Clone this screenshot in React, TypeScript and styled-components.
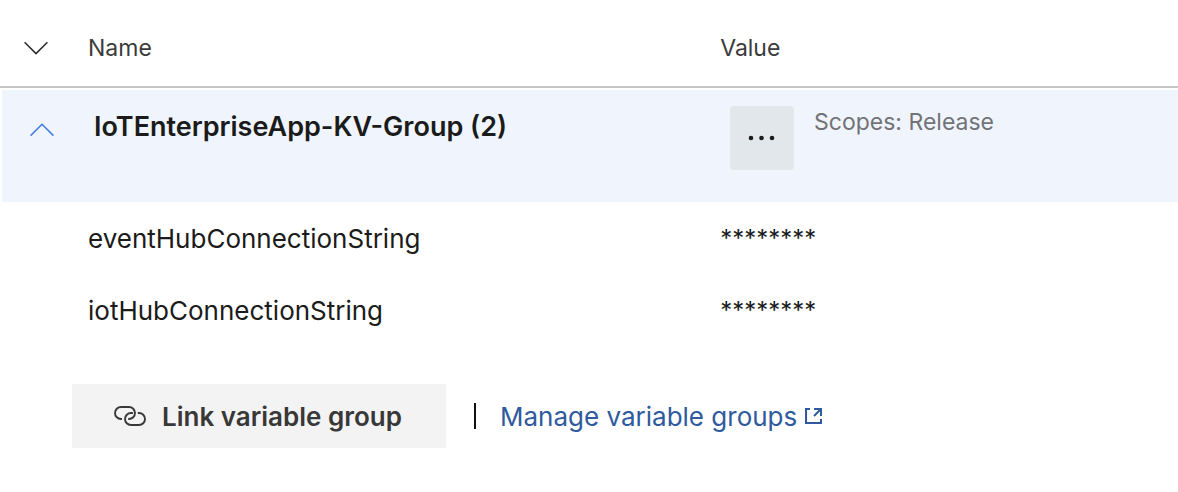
import React from "react";
import styled, { createGlobalStyle } from "styled-components";

const GlobalStyle = createGlobalStyle`
  * {
    box-sizing: border-box;
  }

  body {
    margin: 0;
    background: #ffffff;
    color: #1b1b1b;
    font-family: Inter, "Liberation Sans", sans-serif;
    font-size: 26px;
    line-height: 36px;
  }
`;

const Page = styled.main`
  padding-bottom: 44px;
`;

const VariableTable = styled.table`
  display: block;
  width: 100%;
`;

const TableHead = styled.thead`
  display: block;
  border-bottom: 2px solid #c6c6c8;
`;

const TableBody = styled.tbody`
  display: block;
  padding-top: 2px;
`;

const Row = styled.tr`
  display: grid;
  grid-template-columns: 88px minmax(0, 58fr) minmax(0, 42fr);
  min-height: 72px;
  padding-top: 2px;
  align-items: center;
`;

const HeaderRow = styled(Row)`
  min-height: 86px;
  padding-top: 10px;
`;

const GroupRow = styled(Row)`
  min-height: 112px;
  margin-left: 2px;
  padding-top: 16px;
  background: #f0f5fd;
  align-items: start;
`;

const HeaderCell = styled.th`
  padding: 0;
  color: #3b3b3b;
  font-size: 23px;
  font-weight: 400;
  text-align: left;
`;

const ToggleHeaderCell = styled(HeaderCell)`
  display: flex;
  padding-left: 24px;
`;

const Cell = styled.td`
  padding: 0;
`;

const SecretCell = styled(Cell)`
  font-size: 24px;
`;

const ToggleCell = styled(Cell)`
  display: flex;
  padding: 17px 0 0 28px;
`;

const GroupName = styled.th`
  padding: 3px 0 0 4px;
  font-size: 27px;
  font-weight: 600;
  text-align: left;
`;

const GroupActions = styled(Cell)`
  display: flex;
  align-items: flex-start;
  gap: 20px;
  padding-left: 9px;
`;

const Scopes = styled.span`
  color: #727377;
  font-size: 23px;
  line-height: 32px;
`;

const IconButton = styled.button<{ $color: string }>`
  display: flex;
  padding: 0;
  border: 0;
  background: transparent;
  color: ${({ $color }) => $color};
  cursor: pointer;
`;

const MoreButton = styled.button`
  display: flex;
  flex: none;
  align-items: center;
  justify-content: center;
  width: 64px;
  height: 64px;
  padding: 0;
  border: 0;
  border-radius: 4px;
  background: #e2e7eb;
  color: #1b1b1b;
  cursor: pointer;
`;

const Footer = styled.footer`
  display: flex;
  align-items: center;
  margin-top: 38px;
  padding-left: 72px;
`;

const LinkGroupButton = styled.button`
  display: flex;
  align-items: center;
  gap: 15px;
  height: 64px;
  padding: 0 44px 0 41px;
  border: 0;
  background: #f3f3f3;
  color: #383838;
  font: inherit;
  font-weight: 600;
  white-space: nowrap;
  cursor: pointer;
`;

const Label = styled.span`
  padding-top: 2px;
`;

const Divider = styled.span`
  width: 2px;
  height: 26px;
  margin: 0 24px 0 28px;
  background: #111111;
`;

const ManageLink = styled.a`
  display: flex;
  align-items: center;
  gap: 8px;
  color: #2f5a9e;
  text-decoration: none;
  white-space: nowrap;
`;

const variables = [
  { name: "eventHubConnectionString", value: "********" },
  { name: "iotHubConnectionString", value: "********" },
];

function Chevron({ up = false }: { up?: boolean }) {
  return (
    <svg width="24" height="14" viewBox="0 0 24 14" fill="none" stroke="currentColor" strokeWidth="1.5" aria-hidden="true">
      <path d={up ? "M.6 12.6 12 1.2l11.4 11.4" : "M.6 1.2 12 12.6 23.4 1.2"} />
    </svg>
  );
}

function MoreIcon() {
  return (
    <svg width="28" height="6" viewBox="0 0 28 6" fill="currentColor" aria-hidden="true">
      <circle cx="3" cy="3" r="2.3" />
      <circle cx="13.5" cy="3" r="2.3" />
      <circle cx="24" cy="3" r="2.3" />
    </svg>
  );
}

function LinkIcon() {
  return (
    <svg width="34" height="22" viewBox="0 0 34 22" fill="none" stroke="currentColor" strokeWidth="1.9" aria-hidden="true">
      <path d="M9 14H8A6 6 0 0 1 8 2h8a6 6 0 0 1 0 12h-.8" />
      <path d="M20 8h-2a6 6 0 0 0 0 12h8a6 6 0 0 0 0-12h-1.200" />
    </svg>
  );
}

function ExternalIcon() {
  return (
    <svg width="18" height="18" viewBox="0 0 18 18" fill="none" stroke="currentColor" strokeWidth="2" aria-hidden="true">
      <path d="M5 2H1v14h15v-4M9 2h7v7M16 2 9 9" />
    </svg>
  );
}

export default function App() {
  return (
    <>
      <GlobalStyle />
      <Page>
        <VariableTable>
          <TableHead>
            <HeaderRow>
              <ToggleHeaderCell scope="col">
                <IconButton type="button" $color="#2b2b2b" aria-label="Expand all groups">
                  <Chevron />
                </IconButton>
              </ToggleHeaderCell>
              <HeaderCell scope="col">Name</HeaderCell>
              <HeaderCell scope="col">Value</HeaderCell>
            </HeaderRow>
          </TableHead>
          <TableBody>
            <GroupRow>
              <ToggleCell>
                <IconButton type="button" $color="#3f7be0" aria-label="Collapse group" aria-expanded="true">
                  <Chevron up />
                </IconButton>
              </ToggleCell>
              <GroupName scope="row">IoTEnterpriseApp-KV-Group (2)</GroupName>
              <GroupActions>
                <MoreButton type="button" aria-label="More actions">
                  <MoreIcon />
                </MoreButton>
                <Scopes>Scopes: Release</Scopes>
              </GroupActions>
            </GroupRow>
            {variables.map((variable) => (
              <Row key={variable.name}>
                <Cell />
                <Cell>{variable.name}</Cell>
                <SecretCell>{variable.value}</SecretCell>
              </Row>
            ))}
          </TableBody>
        </VariableTable>
        <Footer>
          <LinkGroupButton type="button">
            <LinkIcon />
            <Label>Link variable group</Label>
          </LinkGroupButton>
          <Divider />
          <ManageLink href="#manage">
            <Label>Manage variable groups</Label>
            <ExternalIcon />
          </ManageLink>
        </Footer>
      </Page>
    </>
  );
}
